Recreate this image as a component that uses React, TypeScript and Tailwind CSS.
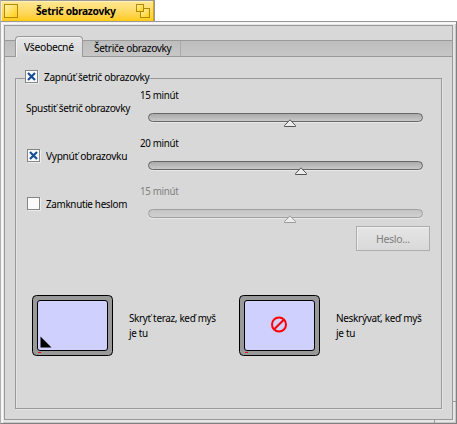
import React from 'react';

function T({ scale, children }: { scale: string; children: React.ReactNode }) {
  return <span className={`inline-block origin-left tracking-[-0.35px] whitespace-nowrap ${scale}`}>{children}</span>;
}

function Check({ on = false }: { on?: boolean }) {
  return (
    <span className="flex h-[13px] w-[13px] shrink-0 items-center justify-center border border-[#858585] bg-[#fbfbfb] shadow-[1px_1px_0_#ececec]">
      {on && (
        <svg width="11" height="11" viewBox="0 0 11 11" className="block shrink-0">
          <path d="M2 2L9 9M9 2L2 9" stroke="#174f92" strokeWidth="2.2" />
        </svg>
      )}
    </span>
  );
}

function Slider({ value, thumb, disabled = false }: { value: string; thumb: string; disabled?: boolean }) {
  return (
    <div className="h-12 w-[284px]">
      <div className={`-mt-px h-[15px] leading-[15px] ${disabled ? 'text-[#808080]' : ''}`}>
        <T scale="scale-x-[0.885]">{value}</T>
      </div>
      <div
        className={`relative mt-[11px] ml-2 h-[9px] w-[275px] rounded-full border shadow-[0_1px_0_#e8e8e8] ${
          disabled ? 'border-[#a0a0a0] bg-linear-to-b from-[#c4c4c4] to-[#d1d1d1]' : 'border-[#666] bg-linear-to-b from-[#aaaaaa] to-[#c9c9c9]'
        }`}
      >
        <svg width="14" height="9" viewBox="0 0 14 9" className={`absolute top-[5px] ${thumb}`}>
          <path d="M7 .8L12.5 6.5V7.5H1.5V6.5Z" fill="#ececec" stroke={disabled ? '#9b9b9b' : '#555'} strokeWidth="1" />
        </svg>
      </div>
    </div>
  );
}

function Monitor({ never = false }: { never?: boolean }) {
  return (
    <svg width="82" height="62" viewBox="0 0 82 62" className="block shrink-0">
      <rect x=".5" y=".5" width="80" height="60" rx="4" fill="#999" stroke="#000" />
      <rect x="5.5" y="5.5" width="70" height="50" rx="2.5" fill="#d0d0ff" stroke="#000" />
      <path d="M6 57.5H9" stroke="#e51b1b" />
      {never ? (
        <g fill="none" stroke="#f00" strokeWidth="2">
          <circle cx="40" cy="29.5" r="7" />
          <path d="M35.2 34.3L44.8 24.7" />
        </g>
      ) : (
        <path d="M8.5 41.5V52.5H19.5Z" fill="#000" />
      )}
    </svg>
  );
}

export default function App() {
  return (
    <div className="flex h-[424px] w-[457px] flex-col bg-white font-['Noto_Sans',sans-serif] text-[11px] text-black">
      <div className="flex h-[21px] w-[155px] shrink-0 items-start border-x border-t border-t-[#999] border-l-[#bbb] border-r-[#999] bg-linear-to-b from-[#ffe895] to-[#ffcb05] pt-[3px] pl-[3px] shadow-[inset_-1px_0_0_#d9a500,inset_1px_1px_0_#fff0b5]">
        <svg width="14" height="14" viewBox="0 0 14 14">
          <defs>
            <linearGradient id="gold" x2="1" y2="1">
              <stop stopColor="#fff3ba" />
              <stop offset="1" stopColor="#ffcc0a" />
            </linearGradient>
          </defs>
          <rect x=".5" y=".5" width="13" height="13" fill="url(#gold)" stroke="#b48b00" />
        </svg>
        <span className="ml-[18px] w-[101px] leading-[14px] font-bold">
          <T scale="scale-x-[0.935]">Šetrič obrazovky</T>
        </span>
        <svg width="14" height="14" viewBox="0 0 14 14" className="-ml-px shrink-0">
          <rect x="4.5" y="4.5" width="9" height="9" fill="url(#gold)" stroke="#b48b00" />
          <rect x=".5" y=".5" width="7" height="7" fill="url(#gold)" stroke="#b48b00" />
        </svg>
      </div>

      <div className="relative h-[403px] w-[457px] shrink-0 border border-t-[#999] border-r-[#808080] border-b-[#808080] border-l-[#b0b0b0] bg-[#e6e6e6] p-[3px] shadow-[inset_1px_1px_0_#f2f2f2,inset_2px_2px_0_#fafafa,inset_-1px_-1px_0_#c8c8c8]">
        <i className="absolute right-0 bottom-[21px] h-px w-[3px] bg-[#999]" />
        <i className="absolute right-[21px] bottom-0 h-[3px] w-px bg-[#999]" />
        <main className="flex h-full w-full flex-col border border-[#999] bg-[#d8d8d8]">
          <div className="h-[14px] shrink-0" />
          <nav className="flex h-[17px] shrink-0 items-end border-y border-[#999] bg-linear-to-b from-[#bebebe] to-[#c6c6c6] pl-[10px]">
            <div className="relative -mb-px h-[21px] w-[68px] rounded-t-[4px] border border-b-0 border-[#999] bg-linear-to-b from-[#e7e7e7] to-[#d8d8d8] pl-2 leading-[20px] shadow-[inset_1px_1px_0_#f2f2f2]">
              <T scale="scale-x-[0.94]">Všeobecné</T>
            </div>
            <div className="h-[15px] w-[98px] border-r border-[#aaa] pl-[11px] leading-[14px]">
              <T scale="scale-x-[0.915]">Šetriče obrazovky</T>
            </div>
          </nav>
          <div className="pt-[10px] pl-[10px]">
            <fieldset className="h-[342px] w-[427px] border border-[#999] shadow-[inset_1px_0_0_#e4e4e4,1px_1px_0_#e4e4e4]">
              <legend className="ml-[9px] h-[22px] w-[124px] bg-[#d8d8d8]">
                <div className="flex h-[18px] items-center">
                  <Check on />
                  <span className="ml-[6px] leading-[15px]">
                    <T scale="scale-x-[0.915]">Zapnúť šetrič obrazovky</T>
                  </span>
                </div>
              </legend>
              <div className="-mt-px grid h-[144px] grid-cols-[124px_284px] grid-rows-[48px_48px_48px]">
                <div className="pt-[12px] pl-[10px] leading-[15px]">
                  <T scale="scale-x-[0.915]">Spustiť šetrič obrazovky</T>
                </div>
                <Slider value="15 minút" thumb="left-[134px]" />
                <div className="mt-[13px] flex h-[13px] items-center pl-[11px]">
                  <Check on />
                  <span className="ml-[6px] leading-[15px]">
                    <T scale="scale-x-[0.927]">Vypnúť obrazovku</T>
                  </span>
                </div>
                <Slider value="20 minút" thumb="left-[145px]" />
                <div className="mt-[13px] flex h-[13px] items-center pl-[11px]">
                  <Check />
                  <span className="ml-[6px] leading-[15px]">
                    <T scale="scale-x-[0.895]">Zamknutie heslom</T>
                  </span>
                </div>
                <Slider value="15 minút" thumb="left-[134px]" disabled />
              </div>
              <button className="-mt-[6px] ml-[340px] block h-[25px] w-[74px] border border-[#adadad] bg-linear-to-b from-[#e5e5e5] to-[#d9d9d9] pl-[19px] text-left text-[11px] leading-[22px] text-[#808080] shadow-[inset_1px_1px_0_#eeeeee]">
                <T scale="scale-x-[0.96]">Heslo...</T>
              </button>
              <div className="mt-[44px] ml-[16px] flex leading-[15px]">
                <Monitor />
                <div className="w-[125px] pt-[15px] pl-[15px]">
                  <T scale="scale-x-[0.9]">Skryť teraz, keď myš<br />je tu</T>
                </div>
                <Monitor never />
                <div className="pt-[15px] pl-[15px]">
                  <T scale="scale-x-[0.91]">Neskrývať, keď myš<br />je tu</T>
                </div>
              </div>
            </fieldset>
          </div>
        </main>
      </div>
    </div>
  );
}
